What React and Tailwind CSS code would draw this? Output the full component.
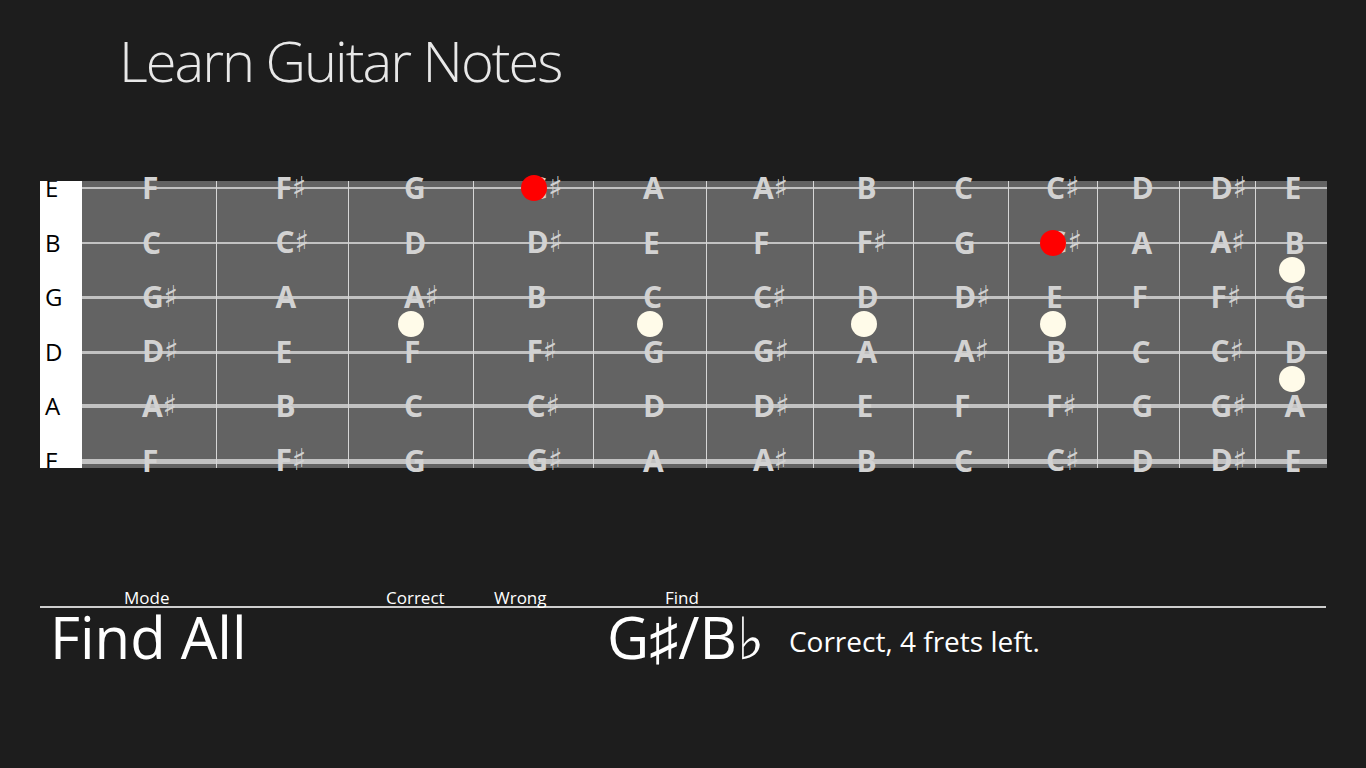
import React from 'react';

// fret widths measured from the nut (px), last fret ends at the board edge
const FRETS = [
  'w-[135px]', 'w-[132px]', 'w-[125px]', 'w-[120px]', 'w-[113px]', 'w-[107px]',
  'w-[100px]', 'w-[95px]', 'w-[89px]', 'w-[82px]', 'w-[76px]', 'w-[71px]',
];

const STRINGS = [
  { name: 'E', line: '-top-[1px] h-[2px]', notes: ['F', 'F#', 'G', 'G#', 'A', 'A#', 'B', 'C', 'C#', 'D', 'D#', 'E'] },
  { name: 'B', line: '-top-[1px] h-[2px]', notes: ['C', 'C#', 'D', 'D#', 'E', 'F', 'F#', 'G', 'G#', 'A', 'A#', 'B'] },
  { name: 'G', line: '-top-[1px] h-[3px]', notes: ['G#', 'A', 'A#', 'B', 'C', 'C#', 'D', 'D#', 'E', 'F', 'F#', 'G'] },
  { name: 'D', line: '-top-[1px] h-[3px]', notes: ['D#', 'E', 'F', 'F#', 'G', 'G#', 'A', 'A#', 'B', 'C', 'C#', 'D'] },
  { name: 'A', line: '-top-[2px] h-[4px]', notes: ['A#', 'B', 'C', 'C#', 'D', 'D#', 'E', 'F', 'F#', 'G', 'G#', 'A'] },
  { name: 'E', line: '-top-[2px] h-[5px]', notes: ['F', 'F#', 'G', 'G#', 'A', 'A#', 'B', 'C', 'C#', 'D', 'D#', 'E'] },
];

// guessed notes (string index, fret index)
const WRONG = [[0, 3], [1, 8]];

// inlay markers: fret index -> gap slots (gap k sits between string k and k+1)
const INLAYS = { 2: [2], 4: [2], 6: [2], 8: [2], 11: [1, 3] };

function Dot({ color }) {
  return (
    <div className={`absolute left-1/2 top-0 -ml-[13px] -mt-[13px] w-[26px] h-[26px] rounded-full ${color}`} />
  );
}

function NoteLabel({ note }) {
  const sharp = note.endsWith('#');
  return (
    <span className="relative w-[14px] whitespace-nowrap leading-none text-[30px] font-bold text-[#d2d2d2] font-['Open_Sans',sans-serif]">
      {note[0]}
      {sharp && (
        <span className="relative -top-[1px] font-['DejaVu_Sans',sans-serif] font-normal text-[30px] leading-none">♯</span>
      )}
    </span>
  );
}

function FretColumn({ index }) {
  const items = [];
  STRINGS.forEach((s, si) => {
    const isWrong = WRONG.some(([a, b]) => a === si && b === index);
    items.push(
      <div key={`s${si}`} className="relative h-0 flex items-center justify-center">
        <div className={`absolute left-0 right-0 bg-[#c2c2c2] ${s.line}`} />
        <NoteLabel note={s.notes[index]} />
        {isWrong && <Dot color="bg-[#ff0000]" />}
      </div>
    );
    if (si < STRINGS.length - 1) {
      const inlay = (INLAYS[index] || []).includes(si);
      items.push(
        <div key={`g${si}`} className="relative h-0">
          {inlay && <Dot color="bg-[#fffbe9]" />}
        </div>
      );
    }
  });

  return (
    <div className={`${FRETS[index]} shrink-0 flex flex-col justify-between py-[7px] ${index < 11 ? 'border-r border-[#d6d6d6]' : ''}`}>
      {items}
    </div>
  );
}

export default function App() {
  return (
    <div className="w-[1366px] h-[768px] bg-[#1d1d1d] overflow-hidden font-['Open_Sans',sans-serif]">
      {/* Title */}
      <h1 className="pl-[119px] pt-[32px] text-[56px] leading-none font-light tracking-[-2px] text-[#e8e8e8]">
        Learn Guitar Notes
      </h1>

      {/* Fretboard */}
      <div className="ml-[40px] mt-[93px] w-[1287px] h-[287px] flex">
        <div className="w-[42px] shrink-0 bg-white overflow-hidden flex flex-col justify-between py-[7px]">
          {STRINGS.map((s, i) => (
            <div key={i} className="h-0 flex items-center pl-[5px]">
              <span className="text-[24px] leading-none text-black">{s.name}</span>
            </div>
          ))}
        </div>
        <div className="flex-1 flex bg-[#636363]">
          {FRETS.map((_, i) => (
            <FretColumn key={i} index={i} />
          ))}
        </div>
      </div>

      {/* Status */}
      <div className="ml-[40px] mt-[121px] w-[1286px]">
        <div className="flex h-[17px] text-[17px] leading-none text-white border-b-2 border-[#cdcdcd] box-content">
          <div className="w-[346px] pl-[84px]">Mode</div>
          <div className="w-[108px]">Correct</div>
          <div className="w-[171px]">Wrong</div>
          <div>Find</div>
        </div>
        <div className="flex items-start text-white">
          <div className="w-[567px] pl-[10px] text-[58px] leading-none">Find All</div>
          <div className="text-[58px] leading-none">
            G<span className="font-['DejaVu_Sans',sans-serif] font-light">♯</span>/B<span className="font-['DejaVu_Sans',sans-serif] font-light">♭</span>
          </div>
          <div className="ml-[25px] mt-[19px] text-[28px] leading-none">Correct, 4 frets left.</div>
        </div>
      </div>
    </div>
  );
}
